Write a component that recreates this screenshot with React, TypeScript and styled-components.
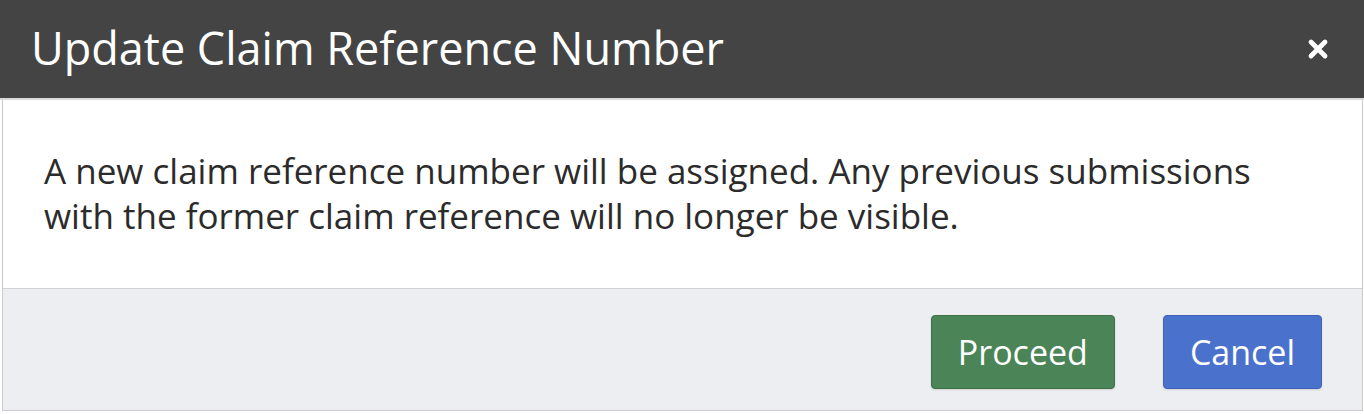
import styled, { createGlobalStyle } from "styled-components"

const GlobalStyle = createGlobalStyle`
  html, body {
    margin: 0;
    padding: 0;
    background: #ffffff;
    font-family: "Open Sans", "Liberation Sans", sans-serif;
  }
`

export default function App() {
  return (
    <>
      <GlobalStyle />
      <Dialog>
        <Header>
          <Title>Update Claim Reference Number</Title>
          <CloseButton aria-label="Close">
            <svg width="22" height="22" viewBox="0 0 22 22">
              <path
                d="M4 4 L18 18 M18 4 L4 18"
                stroke="#ffffff"
                strokeWidth="4.8"
                strokeLinecap="round"
              />
            </svg>
          </CloseButton>
        </Header>
        <Body>
          A new claim reference number will be assigned. Any previous
          submissions with the former claim reference will no longer be
          visible.
        </Body>
        <Footer>
          <ActionButton $variant="proceed">Proceed</ActionButton>
          <ActionButton $variant="cancel">Cancel</ActionButton>
        </Footer>
      </Dialog>
    </>
  )
}

const Dialog = styled.div`
  display: flex;
  flex-direction: column;
  width: 1361px;
  margin-left: 2px;
  box-sizing: border-box;
  border-left: 1px solid #cccccc;
  border-right: 1px solid #cccccc;
`

const Header = styled.header`
  display: flex;
  align-items: center;
  justify-content: space-between;
  height: 100px;
  margin: 0 -2px 0 -3px;
  padding: 0 35px 4px 31px;
  box-sizing: border-box;
  background-color: #444444;
  border-bottom: 2px solid #dadada;
`

const Title = styled.h1`
  margin: 0;
  font-size: 45px;
  font-weight: 400;
  line-height: 1;
  color: #ffffff;
`

const CloseButton = styled.button`
  display: flex;
  align-items: center;
  justify-content: center;
  padding: 0;
  margin-top: 4px;
  background: transparent;
  border: none;
  cursor: pointer;
`

const Body = styled.div`
  padding: 48px 60px 50px 41px;
  font-size: 35px;
  line-height: 45px;
  color: #2b2b2b;
`

const Footer = styled.footer`
  display: flex;
  justify-content: flex-end;
  gap: 48px;
  padding: 26px 40px 21px;
  background-color: #eceef2;
  border-top: 1px solid #d0d2d6;
  border-bottom: 1px solid #cccccc;
`

const ActionButton = styled.button<{ $variant: "proceed" | "cancel" }>`
  height: 74px;
  padding: 0 26px;
  font-family: "Open Sans", "Liberation Sans", sans-serif;
  font-size: 34px;
  color: #ffffff;
  border-radius: 4px;
  cursor: pointer;
  background-color: ${({ $variant }) =>
    $variant === "proceed" ? "#4a8457" : "#4a72cd"};
  border: 1px solid
    ${({ $variant }) => ($variant === "proceed" ? "#3d6f48" : "#3e63b6")};
  box-shadow: 0 1px 2px rgba(0, 0, 0, 0.12);
`
